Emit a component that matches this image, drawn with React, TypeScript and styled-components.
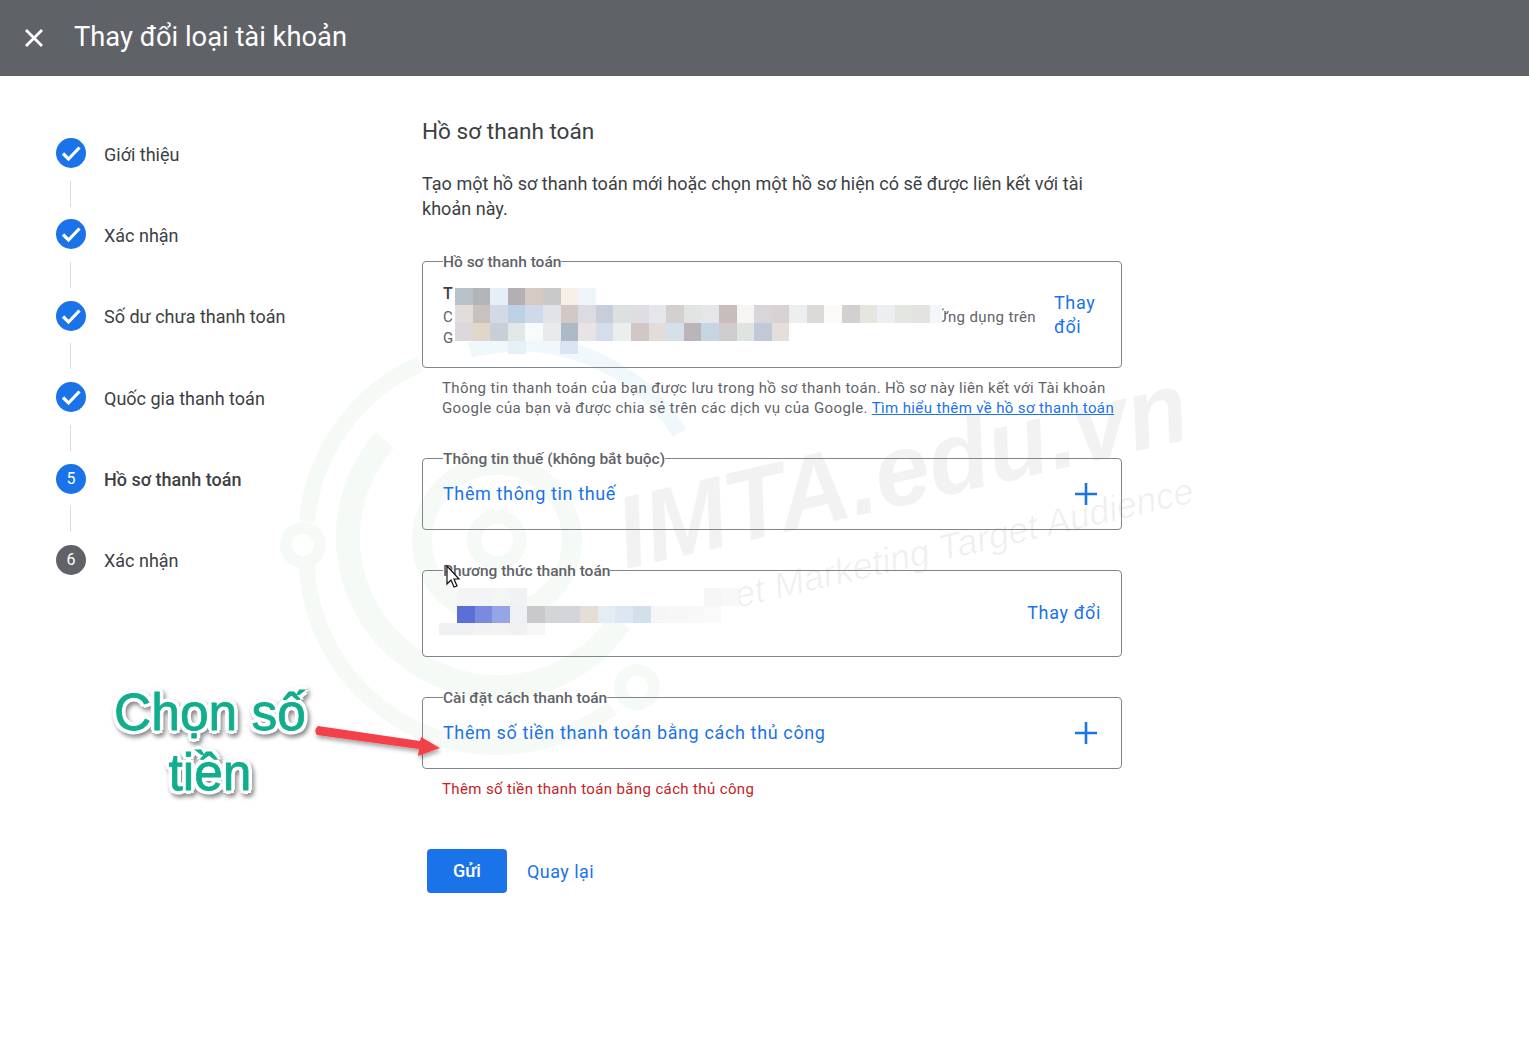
import React from 'react';
import styled, { createGlobalStyle } from 'styled-components';

const GlobalStyle = createGlobalStyle`
  html, body {
    margin: 0;
    padding: 0;
    background: #fff;
    font-family: Roboto, "Liberation Sans", sans-serif;
    color: #3c4043;
  }
  * { box-sizing: border-box; }
`;

const Page = styled.div`
  position: relative;
  width: 1529px;
  height: 1050px;
  overflow: hidden;
  background: #fff;
`;

// Dark title bar across the top.
const Header = styled.header`
  position: relative;
  display: flex;
  align-items: center;
  height: 76px;
  padding-left: 24px;
  background: #5f6368;
  color: #fff;
`;

const HeaderTitle = styled.h1`
  margin: 0 0 0 30px;
  padding-bottom: 2px;
  font-size: 27.3px;
  font-weight: 400;
  line-height: 36px;
`;

const Body = styled.div`
  position: relative;
  display: flex;
`;

// Left stepper column.
const Stepper = styled.nav`
  width: 422px;
  padding: 62px 0 0 56px;
`;

const Step = styled.div`
  display: flex;
  align-items: center;
  height: 30px;
`;

const StepCircle = styled.span<{ $pending?: boolean }>`
  display: flex;
  align-items: center;
  justify-content: center;
  width: 30px;
  height: 30px;
  border-radius: 50%;
  background: ${(p) => (p.$pending ? '#5f6368' : '#1a73e8')};
  color: #fff;
  font-size: 16px;
`;

const StepLabel = styled.span<{ $active?: boolean }>`
  margin-left: 18px;
  padding-top: 2px;
  font-size: 18px;
  font-weight: ${(p) => (p.$active ? 500 : 400)};
  color: #3c4043;
`;

const Connector = styled.div`
  width: 1px;
  height: 26px;
  margin: 12.7px 0 12.7px 14px;
  background: #dadce0;
`;

const Main = styled.main`
  width: 700px;
  padding-top: 41px;
`;

const Title = styled.h2`
  margin: 0;
  font-size: 22.6px;
  font-weight: 400;
  line-height: 30px;
  color: #3c4043;
`;

const Intro = styled.p`
  margin: 24px 0 29px;
  font-size: 18px;
  line-height: 25px;
  letter-spacing: 0.03px;
  color: #3c4043;
`;

// Outlined section, the label sits in the border like a real legend.
const Card = styled.fieldset<{ $height: number }>`
  display: flex;
  align-items: flex-start;
  justify-content: space-between;
  height: ${(p) => p.$height}px;
  margin: 0 0 29px;
  padding: 0 20px;
  border: 1px solid #80868b;
  border-radius: 4px;
`;

const CardLegend = styled.legend`
  padding: 2px 0 0;
  font-size: 15.5px;
  font-weight: 500;
  line-height: 20px;
  color: #5f6368;
`;

const CardRow = styled.div<{ $top: number }>`
  display: flex;
  align-items: center;
  justify-content: space-between;
  width: 100%;
  padding-top: ${(p) => p.$top}px;

  svg {
    margin-right: 4px;
  }
`;

const LinkText = styled.span`
  font-size: 18px;
  line-height: 24px;
  letter-spacing: 0.63px;
  color: #1a73e8;
`;

const ProfileRow = styled.div`
  display: flex;
  justify-content: space-between;
  width: 100%;
  padding-top: 8px;
`;

const ProfileLines = styled.div`
  flex: 1;
  font-size: 15px;
  line-height: 21px;
  letter-spacing: 0.37px;
  color: #5f6368;
`;

const ProfileName = styled.div`
  font-size: 16px;
  font-weight: 500;
  line-height: 27px;
  color: #3c4043;
`;

const ProfileLine = styled.div`
  display: flex;
  justify-content: space-between;
`;

const ChangeStack = styled(LinkText)`
  width: 47px;
  margin: 11px 0 0 18px;
`;

const Help = styled.p`
  margin: -19px 0 29px;
  padding-left: 20px;
  font-size: 15px;
  line-height: 20px;
  letter-spacing: 0.37px;
  color: #5f6368;
  white-space: nowrap;

  a {
    color: #1a73e8;
  }
`;

const ErrorText = styled.p`
  margin: -19px 0 50px;
  padding-left: 20px;
  font-size: 15px;
  line-height: 20px;
  letter-spacing: 0.37px;
  color: #c5221f;
`;

const Actions = styled.div`
  display: flex;
  align-items: center;
  gap: 20px;
  margin-left: 5px;
`;

const PrimaryButton = styled.button`
  width: 80px;
  height: 44px;
  padding: 0 0 2px;
  border: 0;
  border-radius: 4px;
  background: #1a73e8;
  color: #fff;
  font-family: inherit;
  font-size: 18px;
  font-weight: 500;
`;

const BackLink = styled.span`
  font-size: 18px;
  letter-spacing: 0.45px;
  color: #1a73e8;
`;

// Pixelated redaction blocks laid over the card text.
const Mosaic = styled.div<{ $x: number; $y: number }>`
  position: absolute;
  left: ${(p) => p.$x}px;
  top: ${(p) => p.$y}px;
  display: flex;
`;

const MosaicCell = styled.span<{ $color: string; $w: number; $h: number }>`
  width: ${(p) => p.$w}px;
  height: ${(p) => p.$h}px;
  background: ${(p) => p.$color};
`;

const Watermark = styled.div`
  position: absolute;
  inset: 0;
  pointer-events: none;
`;

const WatermarkMark = styled.svg`
  position: absolute;
  left: 0;
  top: 0;
`;

const WatermarkBrand = styled.div`
  position: absolute;
  left: 618px;
  top: 484px;
  font-family: "Liberation Sans", sans-serif;
  font-size: 102px;
  font-weight: 700;
  font-style: italic;
  line-height: 1;
  color: rgba(0, 0, 0, 0.05);
  white-space: nowrap;
  transform: rotate(-13deg) scaleX(0.973);
  transform-origin: left center;
`;

const WatermarkSlogan = styled.div`
  position: absolute;
  left: 735px;
  top: 578px;
  font-family: "Liberation Sans", sans-serif;
  font-size: 36.2px;
  font-style: italic;
  line-height: 1;
  color: rgba(0, 0, 0, 0.06);
  white-space: nowrap;
  transform: rotate(-13deg);
  transform-origin: left center;
`;

// Green callout typed over the screenshot.
const Callout = styled.div`
  position: absolute;
  left: 90px;
  top: 682px;
  width: 240px;
  font-family: "Liberation Sans", sans-serif;
  font-size: 51.5px;
  line-height: 60px;
  text-align: center;
  color: #10ae8c;
  -webkit-text-stroke: 0.8px #10ae8c;
  text-shadow:
    4px 0 0 #fff, -4px 0 0 #fff, 0 4px 0 #fff, 0 -4px 0 #fff,
    3px 3px 0 #fff, -3px 3px 0 #fff, 3px -3px 0 #fff, -3px -3px 0 #fff;
  filter: drop-shadow(2px 3px 2px rgba(0, 0, 0, 0.45));
`;

const Overlay = styled.svg`
  position: absolute;
  left: 0;
  top: 0;
  pointer-events: none;
`;

const steps = [
  { label: 'Giới thiệu', done: true },
  { label: 'Xác nhận', done: true },
  { label: 'Số dư chưa thanh toán', done: true },
  { label: 'Quốc gia thanh toán', done: true },
  { label: 'Hồ sơ thanh toán', number: 5, active: true },
  { label: 'Xác nhận', number: 6, pending: true },
];

const CELL = 17.6;

const mosaics: { x: number; y: number; h: number; w?: number; colors: string[] }[] = [
  { x: 455, y: 288, h: 17, colors: ['#b9c2c9', '#b2b4b8', '#e6eef8', '#b4aeb5', '#d6cbc2', '#c9c9c9', '#f6efe6', '#eef6fa'] },
  {
    x: 455, y: 305, h: 18,
    colors: ['#e2dcda', '#c9c1bd', '#d3d9e5', '#bcd0e6', '#d0d9ea', '#e2e3e6', '#d3c9c4', '#dcdae2', '#c7ced9', '#dde0e1', '#dedde2', '#e4e6ea', '#d4d0cf', '#e2e3e3', '#e4e6e8', '#c9bdbb', '#f7f5f4', '#d9d6da', '#d8d2d4', '#eceef0', '#dbdad6', '#fbfaf8', '#d3d1d0', '#e6e5de', '#eceef1', '#e4e6e1', '#e3e4e1'],
  },
  { x: 930, y: 305, h: 18, w: 12, colors: ['#f3f7fa'] },
  {
    x: 455, y: 323, h: 18,
    colors: ['#dcd8db', '#e0d7c8', '#c9cfd9', '#e2e8e6', '#f7fbfc', '#e9eaec', '#acbac8', '#e8e4e5', '#d4deea', '#ebedee', '#d1c8c6', '#e2dcdb', '#d5e0ea', '#bbb5ba', '#c7d4e2', '#cfcccd', '#dfe4e0', '#bfcad6', '#e4dfdb'],
  },
  { x: 508, y: 341, h: 13, colors: ['#e6f0f8'] },
  { x: 560, y: 341, h: 13, colors: ['#dbe4f2'] },
  { x: 457, y: 588, h: 18, colors: ['#f3f4f5', '#f3f4f5', '#f4f5f5', '#f1f2f3'] },
  { x: 704, y: 588, h: 18, colors: ['#f6f6f6', '#f8f8f8'] },
  {
    x: 457, y: 606, h: 17,
    colors: ['#5c6fd8', '#7a8ade', '#96a6e4', '#eef0f3', '#c9c9cb', '#d3d5d8', '#d3d5da', '#e4ddd8', '#e4ecf4', '#dde7f1', '#d3dfea', '#f6f6f7', '#f7f7f8', '#f8f8f9', '#fafafa'],
  },
  { x: 439, y: 623, h: 12, colors: ['#eff0f1', '#eff0f1', '#f2f2f3', '#f3f3f4', '#f1f1f2', '#f7f7f8'] },
];

const CloseIcon = () => (
  <svg width="20" height="20" viewBox="0 0 20 20" aria-hidden="true">
    <path d="M2 2 L18 18 M18 2 L2 18" stroke="#fff" strokeWidth="2.8" fill="none" />
  </svg>
);

const CheckIcon = () => (
  <svg width="24" height="24" viewBox="0 0 24 24" aria-hidden="true">
    <path d="M4 12.5 L9.5 18 L20.5 6.5" stroke="#fff" strokeWidth="3.2" fill="none" />
  </svg>
);

const PlusIcon = () => (
  <svg width="22" height="22" viewBox="0 0 22 22" aria-hidden="true">
    <path d="M11 0 V22 M0 11 H22" stroke="#1a73e8" strokeWidth="2.6" fill="none" />
  </svg>
);

export default function App() {
  return (
    <Page>
      <GlobalStyle />
      <Watermark>
        <WatermarkMark width="1529" height="1050" viewBox="0 0 1529 1050" fill="none">
          <g stroke="#f5faf6">
            <circle cx="497" cy="540" r="23" strokeWidth="14" />
            <circle cx="497" cy="540" r="75" strokeWidth="20" />
            <path d="M385 440 A147 147 0 0 0 400 650" strokeWidth="24" />
            <path d="M400 650 A147 147 0 0 0 620 622" strokeWidth="24" />
            <path d="M420 364 A190 190 0 0 0 307 522" strokeWidth="16" />
            <path d="M307 566 A190 190 0 0 0 612 708" strokeWidth="16" />
            <circle cx="303" cy="545" r="17" strokeWidth="12" />
            <circle cx="637" cy="687" r="17" strokeWidth="12" />
          </g>
          <path d="M470 350 A190 190 0 0 1 680 433" stroke="#f1f8fb" strokeWidth="16" />
        </WatermarkMark>
        <WatermarkBrand>IMTA.edu.vn</WatermarkBrand>
        <WatermarkSlogan>et Marketing Target Audience</WatermarkSlogan>
      </Watermark>

      <Header>
        <CloseIcon />
        <HeaderTitle>Thay đổi loại tài khoản</HeaderTitle>
      </Header>
      <Body>
        <Stepper>
          {steps.map((step, i) => (
            <React.Fragment key={i}>
              <Step>
                <StepCircle $pending={step.pending}>{step.done ? <CheckIcon /> : step.number}</StepCircle>
                <StepLabel $active={step.active}>{step.label}</StepLabel>
              </Step>
              {i < steps.length - 1 && <Connector />}
            </React.Fragment>
          ))}
        </Stepper>
        <Main>
          <Title>Hồ sơ thanh toán</Title>
          <Intro>Tạo một hồ sơ thanh toán mới hoặc chọn một hồ sơ hiện có sẽ được liên kết với tài khoản này.</Intro>

          <Card $height={118}>
            <CardLegend>Hồ sơ thanh toán</CardLegend>
            <ProfileRow>
              <ProfileLines>
                <ProfileName>T</ProfileName>
                <ProfileLine>
                  <span>C</span>
                  <span>Ứng dụng trên</span>
                </ProfileLine>
                <div>G</div>
              </ProfileLines>
              <ChangeStack>Thay đổi</ChangeStack>
            </ProfileRow>
          </Card>
          <Help>
            Thông tin thanh toán của bạn được lưu trong hồ sơ thanh toán. Hồ sơ này liên kết với Tài khoản
            <br />
            Google của bạn và được chia sẻ trên các dịch vụ của Google. <a href="#">Tìm hiểu thêm về hồ sơ thanh toán</a>
          </Help>

          <Card $height={83}>
            <CardLegend>Thông tin thuế (không bắt buộc)</CardLegend>
            <CardRow $top={13}>
              <LinkText>Thêm thông tin thuế</LinkText>
              <PlusIcon />
            </CardRow>
          </Card>

          <Card $height={98}>
            <CardLegend>Phương thức thanh toán</CardLegend>
            <CardRow $top={20}>
              <span />
              <LinkText>Thay đổi</LinkText>
            </CardRow>
          </Card>

          <Card $height={83}>
            <CardLegend>Cài đặt cách thanh toán</CardLegend>
            <CardRow $top={13}>
              <LinkText>Thêm số tiền thanh toán bằng cách thủ công</LinkText>
              <PlusIcon />
            </CardRow>
          </Card>
          <ErrorText>Thêm số tiền thanh toán bằng cách thủ công</ErrorText>

          <Actions>
            <PrimaryButton>Gửi</PrimaryButton>
            <BackLink>Quay lại</BackLink>
          </Actions>
        </Main>
      </Body>

      {mosaics.map((row, i) => (
        <Mosaic key={i} $x={row.x} $y={row.y}>
          {row.colors.map((color, j) => (
            <MosaicCell key={j} $color={color} $w={row.w ?? CELL} $h={row.h} />
          ))}
        </Mosaic>
      ))}

      <Overlay width="1529" height="1050" viewBox="0 0 1529 1050" fill="none">
        <path
          d="M447 566 L447 584 L451 580 L454 587 L457 586 L454 579 L459 579 Z"
          fill="#fff"
          stroke="#111"
          strokeWidth="1.2"
        />
        <defs>
          <filter id="arrowShadow" x="-10%" y="-40%" width="120%" height="200%">
            <feDropShadow dx="1" dy="3" stdDeviation="2" floodColor="#000" floodOpacity="0.35" />
          </filter>
        </defs>
        <path
          d="M318 726 Q313 730 317 735 L419 749 L418 756 L440 748 L421 737 L420 741 Z"
          fill="#f4404a"
          filter="url(#arrowShadow)"
        />
      </Overlay>

      <Callout>
        Chọn số
        <br />
        tiền
      </Callout>
    </Page>
  );
}
